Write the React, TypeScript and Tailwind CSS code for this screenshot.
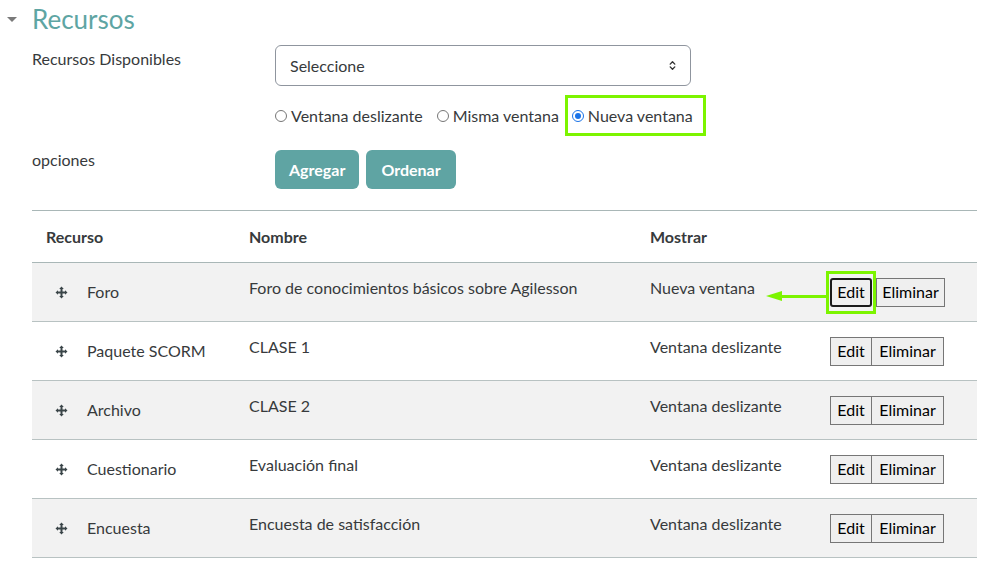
import { ChevronsUpDown } from 'lucide-react';

const rows = [
  { tipo: 'Foro', nombre: 'Foro de conocimientos básicos sobre Agilesson', mostrar: 'Nueva ventana' },
  { tipo: 'Paquete SCORM', nombre: 'CLASE 1', mostrar: 'Ventana deslizante' },
  { tipo: 'Archivo', nombre: 'CLASE 2', mostrar: 'Ventana deslizante' },
  { tipo: 'Cuestionario', nombre: 'Evaluación final', mostrar: 'Ventana deslizante' },
  { tipo: 'Encuesta', nombre: 'Encuesta de satisfacción', mostrar: 'Ventana deslizante' },
];

function MoveIcon() {
  return (
    <svg width="13" height="13" viewBox="0 0 13 13" className="text-[#3a4548]" aria-hidden>
      <path d="M6.5 0.5 L4.2 3 H8.8 Z M6.5 12.5 L4.2 10 H8.8 Z M0.5 6.5 L3 4.2 V8.8 Z M12.5 6.5 L10 4.2 V8.8 Z" fill="currentColor" />
      <path d="M6.5 2.5 V10.5 M2.5 6.5 H10.5" stroke="currentColor" strokeWidth="2" />
    </svg>
  );
}

function Radio({ label, checked }: { label: string; checked?: boolean }) {
  return (
    <label className="flex items-center gap-[4px]">
      <span
        className={
          'flex h-[12px] w-[12px] items-center justify-center rounded-full border ' +
          (checked ? 'border-[#1a73e8]' : 'border-[#767676]')
        }
      >
        {checked && <span className="h-[6px] w-[6px] rounded-full bg-[#1a73e8]" />}
      </span>
      <span>{label}</span>
    </label>
  );
}

export default function App() {
  return (
    <div
      className="h-[566px] w-[993px] overflow-hidden bg-white text-[16px] text-[#373a3c]"
      style={{ fontFamily: 'Lato, "Open Sans", sans-serif' }}
    >
      <div className="flex items-center pl-[7px] pt-[3px]">
        <span className="mr-[15px] mt-[1px] h-0 w-0 border-x-[5px] border-t-[5px] border-x-transparent border-t-[#7a7a7a]" />
        <h2 className="text-[26px] leading-[32px] text-[#5ea5a3]">Recursos</h2>
      </div>

      <div className="mt-[10px] grid grid-cols-[243px_416px] pl-[32px]">
        <div className="pt-[2px]">Recursos Disponibles</div>
        <div className="flex h-[41px] items-center justify-between rounded-[6px] border border-[#8f959e] pl-[14px] pr-[12px]">
          <span>Seleccione</span>
          <ChevronsUpDown size={11} strokeWidth={3} className="text-[#333]" />
        </div>

        <div />
        <div className="mt-[9px] flex h-[41px] items-center gap-[14px] whitespace-nowrap">
          <Radio label="Ventana deslizante" />
          <Radio label="Misma ventana" />
          <div className="-ml-[8px] flex h-[41px] items-center border-[3px] border-[#7cf400] pl-[4px] pr-[10px]">
            <Radio label="Nueva ventana" checked />
          </div>
        </div>

        <div className="pt-[12px]">opciones</div>
        <div className="mt-[14px] flex gap-[7px]">
          <button className="h-[39px] rounded-[6px] bg-[#5fa4a3] px-[14px] font-bold text-white">Agregar</button>
          <button className="h-[39px] rounded-[6px] bg-[#5fa4a3] px-[15px] font-bold text-white">Ordenar</button>
        </div>
      </div>

      <table className="ml-[32px] mt-[21px] w-[945px] table-fixed border-collapse text-left">
        <colgroup>
          <col className="w-[217px]" />
          <col className="w-[401px]" />
          <col className="w-[180px]" />
          <col />
        </colgroup>
        <thead>
          <tr className="h-[52px] border-y border-[#a9b7b7]">
            <th className="pl-[14px] font-bold">Recurso</th>
            <th className="font-bold">Nombre</th>
            <th className="font-bold">Mostrar</th>
            <th />
          </tr>
        </thead>
        <tbody>
          {rows.map((r, i) => (
            <tr key={r.tipo} className={'h-[59px] border-b border-[#b8c2c2] ' + (i % 2 === 0 ? 'bg-[#f2f2f2]' : 'bg-white')}>
              <td className="pl-[23px]">
                <div className="flex items-center gap-[19px]">
                  <MoveIcon />
                  <span>{r.tipo}</span>
                </div>
              </td>
              <td className="pb-[9px]">{r.nombre}</td>
              <td className="relative pb-[8px]">
                {r.mostrar}
                {i === 0 && (
                  <span className="absolute left-[116px] top-[28px] flex items-center">
                    <span className="h-0 w-0 border-y-[5px] border-r-[16px] border-y-transparent border-r-[#7cf400]" />
                    <span className="h-[3px] w-[44px] bg-[#7cf400]" />
                  </span>
                )}
              </td>
              <td>
                <div className="flex items-center text-black">
                  {i === 0 ? (
                    <span className="-my-[8px] -ml-[4px] border-[3px] border-[#7cf400] px-[1px] py-[4px]">
                      <button className="h-[29px] w-[42px] rounded-[3px] border-2 border-[#1b1b1b] bg-[#efefef]">Edit</button>
                    </span>
                  ) : (
                    <button className="h-[29px] w-[42px] border border-[#767676] bg-[#efefef]">Edit</button>
                  )}
                  <button className={'h-[29px] border border-[#767676] bg-[#efefef] ' + (i === 0 ? 'w-[69px]' : '-ml-[1px] w-[73px]')}>
                    Eliminar
                  </button>
                </div>
              </td>
            </tr>
          ))}
        </tbody>
      </table>
    </div>
  );
}
